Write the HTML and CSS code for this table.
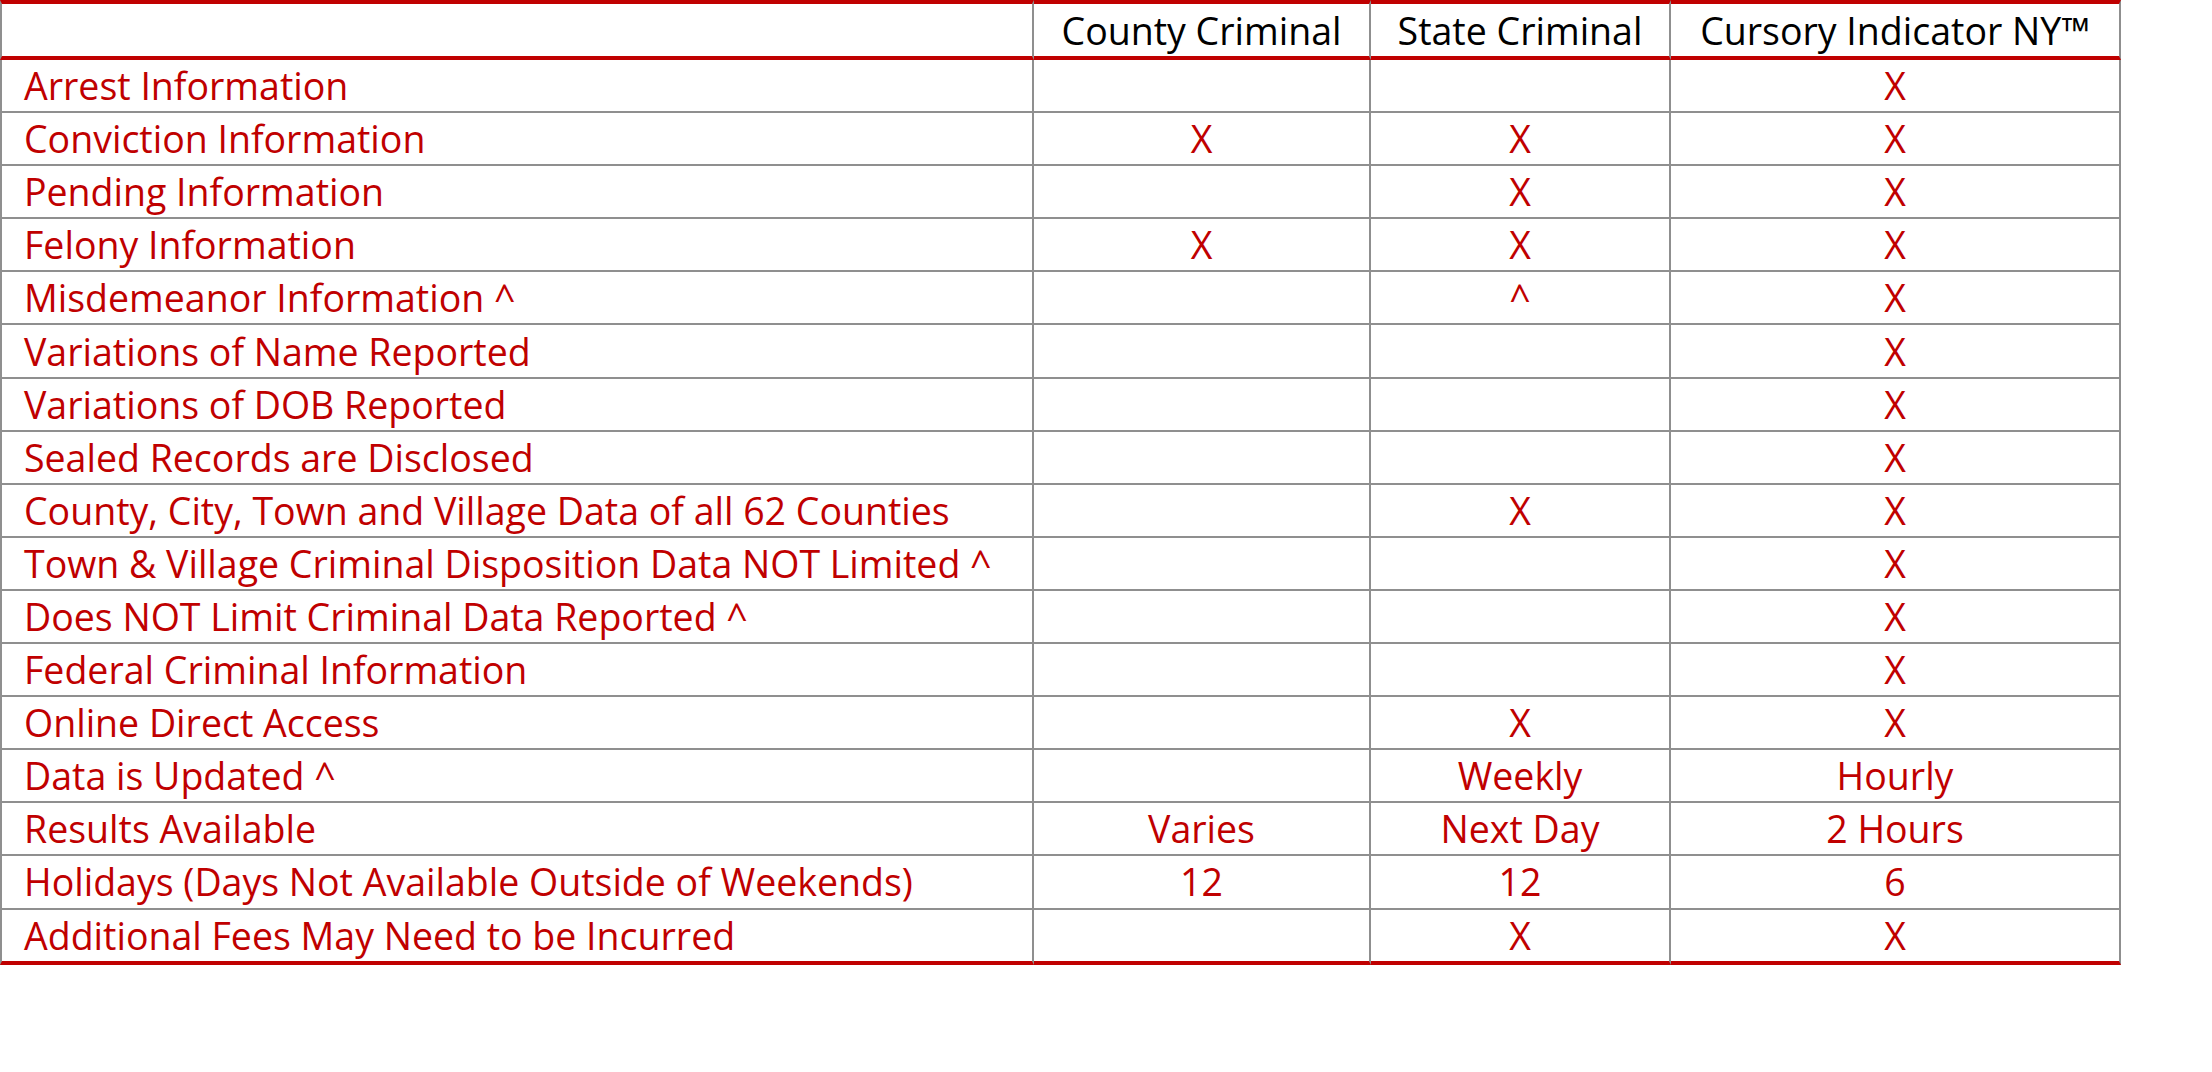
FILE: index.html
```html
<!DOCTYPE html>
<html>
<head>
<meta charset="utf-8">
<link rel="stylesheet" href="styles.css">
</head>
<body>
<table class="compare">
  <colgroup>
    <col class="c-label">
    <col class="c-county">
    <col class="c-state">
    <col class="c-cursory">
  </colgroup>
  <thead>
    <tr>
      <th class="label"></th>
      <th>County Criminal</th>
      <th>State Criminal</th>
      <th>Cursory Indicator NY™</th>
    </tr>
  </thead>
  <tbody>
    <tr><td class="label">Arrest Information</td><td></td><td></td><td>X</td></tr>
    <tr><td class="label">Conviction Information</td><td>X</td><td>X</td><td>X</td></tr>
    <tr><td class="label">Pending Information</td><td></td><td>X</td><td>X</td></tr>
    <tr><td class="label">Felony Information</td><td>X</td><td>X</td><td>X</td></tr>
    <tr><td class="label">Misdemeanor Information ^</td><td></td><td>^</td><td>X</td></tr>
    <tr><td class="label">Variations of Name Reported</td><td></td><td></td><td>X</td></tr>
    <tr><td class="label">Variations of DOB Reported</td><td></td><td></td><td>X</td></tr>
    <tr><td class="label">Sealed Records are Disclosed</td><td></td><td></td><td>X</td></tr>
    <tr><td class="label">County, City, Town and Village Data of all 62 Counties</td><td></td><td>X</td><td>X</td></tr>
    <tr><td class="label">Town &amp; Village Criminal Disposition Data NOT Limited ^</td><td></td><td></td><td>X</td></tr>
    <tr><td class="label">Does NOT Limit Criminal Data Reported ^</td><td></td><td></td><td>X</td></tr>
    <tr><td class="label">Federal Criminal Information</td><td></td><td></td><td>X</td></tr>
    <tr><td class="label">Online Direct Access</td><td></td><td>X</td><td>X</td></tr>
    <tr><td class="label">Data is Updated ^</td><td></td><td>Weekly</td><td>Hourly</td></tr>
    <tr><td class="label">Results Available</td><td>Varies</td><td>Next Day</td><td>2 Hours</td></tr>
    <tr><td class="label">Holidays (Days Not Available Outside of Weekends)</td><td>12</td><td>12</td><td>6</td></tr>
    <tr><td class="label">Additional Fees May Need to be Incurred</td><td></td><td>X</td><td>X</td></tr>
  </tbody>
</table>
</body>
</html>
```

FILE: styles.css
```css
html, body {
  margin: 0;
  padding: 0;
  background: #ffffff;
}

.compare {
  table-layout: fixed;
  width: 2121px;
  border-collapse: separate;
  border-spacing: 0;
  font-family: "Open Sans", "Noto Sans", sans-serif;
  font-size: 37.5px;
  line-height: 51px;
}

.c-label { width: 1034px; }
.c-county { width: 337px; }
.c-state { width: 300px; }
.c-cursory { width: 450px; }

.compare th,
.compare td {
  padding: 0;
  text-align: center;
  vertical-align: middle;
  border-right: 2px solid #8f8f8f;
  white-space: nowrap;
  overflow: hidden;
}

.compare th:first-child,
.compare td:first-child {
  border-left: 2px solid #8f8f8f;
}

.compare th {
  height: 52px;
  font-weight: 400;
  color: #000000;
  border-top: 4px solid #c00000;
  border-bottom: 4px solid #c00000;
}

.compare td {
  height: 51.1px;
  color: #c00000;
  border-bottom: 2px solid #8f8f8f;
}

.compare tbody tr:last-child td {
  border-bottom: 4px solid #c00000;
}

.compare .label {
  text-align: left;
  padding-left: 22px;
}
```
